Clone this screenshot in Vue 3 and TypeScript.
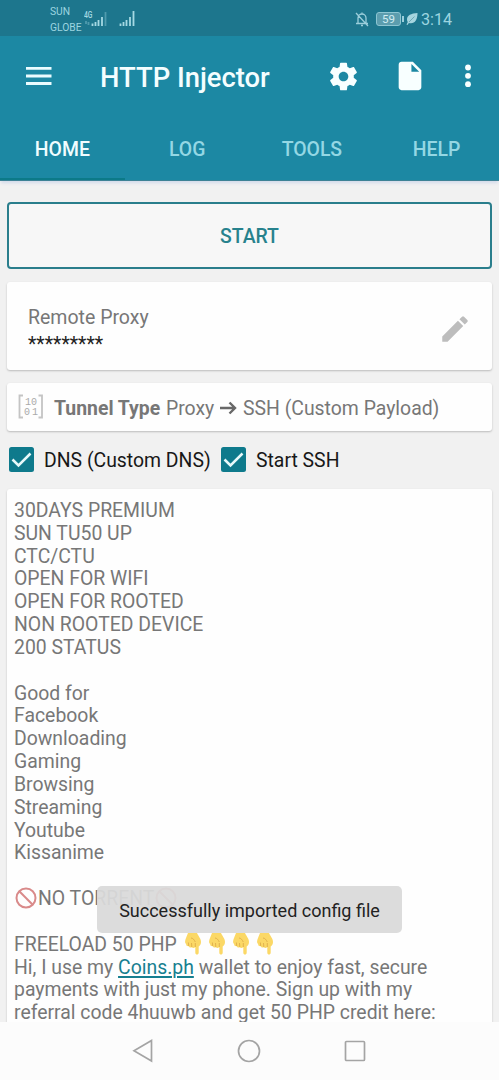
<script setup lang="ts">
import { ref } from 'vue'

const tabs: string[] = ['HOME', 'LOG', 'TOOLS', 'HELP']
const activeTab = ref('HOME')

const options = ref([
  { id: 'dns', label: 'DNS (Custom DNS)', on: true },
  { id: 'ssh', label: 'Start SSH', on: true },
])

const intro: string[] = [
  '30DAYS PREMIUM',
  'SUN TU50 UP',
  'CTC/CTU',
  'OPEN FOR WIFI',
  'OPEN FOR ROOTED',
  'NON ROOTED DEVICE',
  '200 STATUS',
  '',
  'Good for',
  'Facebook',
  'Downloading',
  'Gaming',
  'Browsing',
  'Streaming',
  'Youtube',
  'Kissanime',
  '',
]
</script>

<template>
  <div class="screen">
    <header class="status">
      <div class="carriers"><span>SUN</span><span>GLOBE</span></div>
      <svg class="signals" width="58" height="24" viewBox="0 0 58 24">
        <text x="0" y="12" font-size="8.500" font-weight="500" textLength="8.500" lengthAdjust="spacingAndGlyphs">4G</text>
        <path d="M2 15v3M4.500 16v3" class="faint" />
        <path d="M8.500 20v-2.500M11.500 20v-4M14.500 20v-6M18 20v-9" />
        <path d="M21.500 20V6" class="faint" />
        <path d="M36.500 20v-2.500M39.500 20v-4M42.500 20v-6M46 20v-9M49.500 20V5" />
      </svg>
      <div class="status-right">
        <svg width="16" height="18" viewBox="0 0 16 18" class="bell">
          <path d="M4 13.500V8a4 4 0 0 1 4-4 4 4 0 0 1 4 4v5.500M2 13.500h12M7 15.500h2M8 4V2.500M2 3l12 13" />
        </svg>
        <div class="battery"><span>59</span></div>
        <svg width="12" height="14" viewBox="0 0 12 14" class="leaf">
          <path d="M11.500 1C5 1.300 1 3.500 1 7.500c0 1 .3 1.900.8 2.600L.5 12.500l1 .5 1.400-2C8.500 12.500 11.500 8 11.500 1Z" />
          <path d="M3 10 8.500 4.500" class="vein" />
        </svg>
        <span class="clock">3:14</span>
      </div>
    </header>

    <div class="toolbar">
      <svg class="menu" width="26" height="20" viewBox="0 0 26 20"><path d="M0 2.400h25.500M0 10h25.500M0 17.500h25.500" /></svg>
      <h1>HTTP Injector</h1>
      <svg class="gear" width="33" height="33" viewBox="0 0 24 24">
        <path d="M19.430 12.980c.04-.32.070-.64.070-.98s-.03-.66-.07-.98l2.110-1.650c.19-.15.24-.42.12-.64l-2-3.460c-.12-.22-.39-.3-.61-.22l-2.490 1c-.52-.4-1.080-.73-1.690-.98l-.38-2.650A.488.488 0 0 0 14 2h-4c-.25 0-.46.18-.49.42l-.38 2.650c-.61.25-1.170.59-1.690.98l-2.490-1c-.23-.09-.49 0-.61.22l-2 3.460c-.13.22-.07.49.12.64l2.110 1.650c-.04.32-.07.65-.07.98s.03.66.07.98l-2.110 1.650c-.19.15-.24.42-.12.64l2 3.460c.12.22.39.3.61.22l2.490-1c.52.4 1.080.73 1.690.98l.38 2.650c.03.24.24.42.49.42h4c.25 0 .46-.18.49-.42l.38-2.650c.61-.25 1.170-.59 1.690-.98l2.490 1c.23.09.49 0 .61-.22l2-3.460c.12-.22.07-.49-.12-.64l-2.110-1.650zM12 15.500c-1.930 0-3.500-1.570-3.500-3.500s1.570-3.500 3.500-3.500 3.500 1.570 3.500 3.500-1.570 3.500-3.500 3.500z" />
      </svg>
      <svg class="file" width="34" height="34" viewBox="0 0 24 24"><path d="M6 2c-1.100 0-1.990.9-1.990 2L4 20c0 1.100.89 2 1.990 2H18c1.100 0 2-.9 2-2V8l-6-6H6zm7 7V3.500L18.500 9H13z" /></svg>
      <svg class="dots" width="8" height="24" viewBox="0 0 8 24"><circle cx="4" cy="3.500" r="2.900" /><circle cx="4" cy="11.800" r="2.900" /><circle cx="4" cy="20.200" r="2.900" /></svg>
    </div>

    <nav class="tabs">
      <button v-for="tab in tabs" :key="tab" :class="{ active: tab === activeTab }" @click="activeTab = tab">{{ tab }}</button>
    </nav>

    <main>
      <button class="start">START</button>

      <section class="card proxy">
        <div>
          <div class="proxy-label">Remote Proxy</div>
          <div class="proxy-value">*********</div>
        </div>
        <svg width="34" height="34" viewBox="0 0 24 24"><path d="M3 17.250V21h3.750L17.810 9.940l-3.750-3.750L3 17.250zM20.710 7.040a.996.996 0 0 0 0-1.410l-2.340-2.340a.996.996 0 0 0-1.410 0l-1.830 1.830 3.750 3.750 1.830-1.830z" /></svg>
      </section>

      <section class="card tunnel">
        <svg class="binary" width="26" height="26" viewBox="0 0 26 26">
          <path d="M5 1.500H1.500v22H5M20.500 1.500H24v22h-3.500" />
          <text x="7" y="11">1</text><text x="13" y="11">0</text>
          <text x="6" y="21">0</text><text x="14" y="21">1</text>
        </svg>
        <b>Tunnel Type</b>
        <span class="from">Proxy</span>
        <svg class="arrow" width="17" height="14" viewBox="0 0 17 14"><path d="M0 7h15M9.500 1.500 15 7l-5.500 5.500" /></svg>
        <span class="to">SSH (Custom Payload)</span>
      </section>

      <div class="options">
        <label v-for="o in options" :key="o.id" :class="o.id" @click="o.on = !o.on">
          <svg width="25" height="25" viewBox="0 0 25 25">
            <rect width="25" height="25" rx="2.500" />
            <path v-if="o.on" d="m3.500 12.500 6 6L21.500 6.500" />
          </svg>
          <span>{{ o.label }}</span>
        </label>
      </div>

      <section class="card notes">
        <p v-for="(line, i) in intro" :key="i">{{ line }}</p>
        <p class="torrent">
          <svg class="ban" width="24" height="24" viewBox="0 0 24 24"><circle cx="12" cy="12" r="9.500" /><path d="m5.300 5.300 13.400 13.400" /></svg><span>NO TORRENT</span><svg class="ban" width="24" height="24" viewBox="0 0 24 24"><circle cx="12" cy="12" r="9.500" /><path d="m5.300 5.300 13.400 13.400" /></svg>
        </p>
        <p></p>
        <p class="freeload">
          <span>FREELOAD 50 PHP</span>
          <svg v-for="n in 4" :key="n" class="hand" width="24" height="24" viewBox="0 0 24 24">
            <path class="palm" d="M7 1h9c1 3 4 5 4 9 0 2-1 4-2.300 4.500V20.500c0 2.700-3.400 2.700-3.400 0V15c-1 1.400-2.800 1.300-3.400.2-1.300.8-2.700.3-3.100-.9-1.500.3-2.700-.6-2.700-2.200C3.500 11 4 8 5 6Z" />
            <path class="crease" d="M14.300 15v-4M10.800 15l-.3-4M7.700 14l-.3-3.500M10 6c2 .2 3 1.500 4.300 4" />
          </svg>
        </p>
        <p>Hi, I use my <a>Coins.ph</a> wallet to enjoy fast, secure</p>
        <p>payments with just my phone. Sign up with my</p>
        <p>referral code 4huuwb and get 50 PHP credit here:</p>
      </section>
    </main>

    <div class="toast" role="status">Successfully imported config file</div>

    <footer>
      <svg width="22" height="24" viewBox="0 0 22 24"><path d="M20.500 1.500v20.500L3 11.800Z" /></svg>
      <svg width="24" height="24" viewBox="0 0 24 24"><circle cx="12" cy="12" r="10.500" /></svg>
      <svg width="22" height="22" viewBox="0 0 22 22"><rect x="1.500" y="1.500" width="19" height="19" rx="1" /></svg>
    </footer>
  </div>
</template>

<style>
body { margin: 0; background: #f1f1f1; }
</style>

<style scoped>
* { box-sizing: border-box; }
.screen { position: relative; width: 499px; height: 1080px; display: flex; flex-direction: column; overflow: hidden; background: #f1f1f1; font-family: Roboto, "Liberation Sans", sans-serif; color: #777; }
svg { display: block; flex: none; fill: none; }
button { font-family: inherit; border: 0; padding: 0; margin: 0; }
.status { height: 36px; flex: none; display: flex; align-items: flex-start; padding-left: 50px; background: #1d768d; color: #9cd5e0; }
.carriers { display: flex; flex-direction: column; width: 34px; padding-top: 4px; font-size: 10.300px; line-height: 15.500px; }
.signals { margin-top: 6px; stroke: #a5d9e3; stroke-width: 1.800; }
.signals text { fill: #a5d9e3; stroke: none; }
.signals .faint { stroke: #4f9bad; }
.status-right { display: flex; align-items: center; margin-left: 212px; height: 38px; }
.bell { stroke: #9bcedb; stroke-width: 1.300; }
.battery { position: relative; width: 25px; height: 14px; margin-left: 6px; border: 1px solid #8cc5d2; border-radius: 3px; background: #5c9dae; color: #d0edf3; font-size: 11.500px; line-height: 13px; text-align: center; }
.battery::after { content: ""; position: absolute; right: -4px; top: 3px; width: 2px; height: 6px; background: #9bcedb; }
.leaf { margin-left: 5px; fill: #a5d5df; }
.leaf .vein { stroke: #5595a6; stroke-width: .7; }
.clock { margin: 1px 0 0 3px; font-size: 16.200px; }
.toolbar { height: 80px; flex: none; display: flex; align-items: center; background: #1c88a3; padding-left: 26px; }
.menu { stroke: #eafcff; stroke-width: 2.800; }
h1 { margin: 0 0 0 48px; width: 227px; color: #f4feff; font-size: 27.400px; font-weight: 500; line-height: 34px; padding-top: 3px; white-space: nowrap; }
.gear, .file, .dots { fill: #f8ffff; }
.file { margin-left: 33px; }
.dots { margin-left: 37px; }
.tabs { height: 65px; flex: none; display: grid; grid-template-columns: repeat(4, 1fr); background: #1c88a3; border-bottom: 1px solid #3d8295; box-shadow: 0 3px 3px -1px #d3daea; }
.tabs button { padding-top: 4px; background: none; color: #94d7e4; font-size: 19.400px; font-weight: 500; border-bottom: 2px solid transparent; }
.tabs .active { color: #f0fdff; border-bottom-color: #0c7a88; }
main { flex: 1; min-height: 0; overflow: hidden; padding: 21px 7px 0; display: flex; flex-direction: column; }
.start { height: 67px; flex: none; padding-top: 1px; border: 2px solid #2a7e8c; border-radius: 4px; background: #f7f7f7; color: #27828d; font-size: 19.400px; font-weight: 500; }
.card { flex: none; background: #fefefe; border-radius: 3px; box-shadow: 0 1px 2px #bbb; }
.proxy { height: 88px; margin-top: 13px; padding: 23px 21px 0; display: flex; justify-content: space-between; }
.proxy svg { margin: 7px -1px 0 0; fill: #bdbdbd; }
.proxy-label { font-size: 19.500px; line-height: 26px; }
.proxy-value { margin-top: 2px; color: #222; font-size: 19.400px; line-height: 24px; }
.tunnel { height: 48px; margin-top: 13px; padding: 2px 0 0 11px; display: flex; align-items: center; font-size: 19.400px; white-space: nowrap; }
.binary { margin-top: -3px; stroke: #c4c4c4; stroke-width: 1.800; }
.binary text { fill: #aaa; stroke: none; font: 10px "Liberation Mono", monospace; }
.tunnel b { margin-left: 10px; width: 112px; }
.from { width: 54px; }
.arrow { stroke: #686868; stroke-width: 2.400; }
.to { margin-left: 6px; }
.options { height: 58px; flex: none; display: flex; align-items: center; padding: 0 0 1px 2px; color: #181818; font-size: 19.400px; white-space: nowrap; }
.options label { display: flex; align-items: center; }
.options .dns { width: 212px; }
.options span { margin: 2px 0 0 10px; }
.options rect { fill: #0e7a8c; }
.options path { stroke: #e7f9fa; stroke-width: 2.500; }
.notes { height: 560px; padding: 11px 7px; font-size: 19.400px; line-height: 22.830px; white-space: nowrap; }
.notes p { margin: 0; height: 22.830px; }
.torrent, .freeload { display: flex; align-items: center; }
.ban { margin-top: -3px; stroke: #d98a8a; stroke-width: 2; }
.freeload span { width: 167px; }
.hand { margin-top: -2px; }
.palm { fill: #fbd866; }
.crease { stroke: #dfae4b; stroke-width: .9; }
a { color: #167f90; text-decoration: underline; text-underline-offset: 2px; text-decoration-thickness: 1.500px; }
.toast { position: absolute; left: 97px; top: 886px; width: 305px; height: 47px; border-radius: 5px; background: rgba(218, 218, 218, .94); color: #222; font-size: 18px; line-height: 49px; text-align: center; white-space: nowrap; }
footer { height: 58px; flex: none; display: flex; align-items: center; justify-content: space-between; padding: 0 133px 0 131px; background: #fcfcfc; }
footer svg { stroke: #a4a4a4; stroke-width: 1.700; }
</style>
